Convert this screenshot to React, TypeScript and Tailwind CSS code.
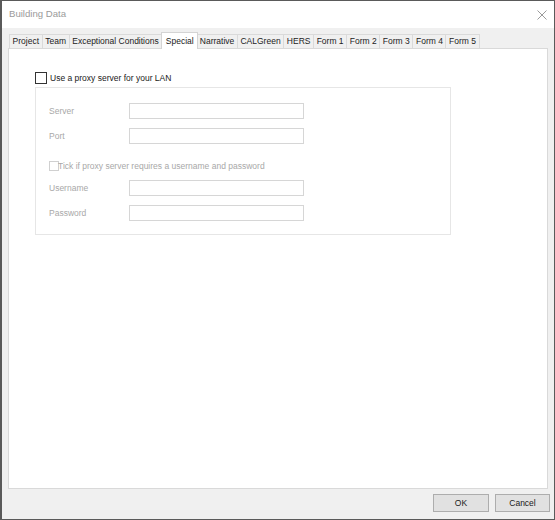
import React from 'react';

const tabs = ['Project', 'Team', 'Exceptional Conditions', 'Special', 'Narrative', 'CALGreen', 'HERS', 'Form 1', 'Form 2', 'Form 3', 'Form 4', 'Form 5'];

function Field({ label }: { label: string }) {
  return (
    <div className="flex items-center h-[16px]">
      <span className="w-[93px] pl-[13px] text-[#a8a8a8]">{label}</span>
      <div className="w-[175px] h-[16px] border border-[#d6d6d6] bg-white" />
    </div>
  );
}

export default function App() {
  return (
    <div
      className="w-[555px] h-[520px] flex flex-col bg-[#f0f0f0] border border-[#5a5a5a] border-l-2 text-[8.5px] text-[#1a1a1a] overflow-hidden"
      style={{ fontFamily: '"Liberation Sans", Arial, sans-serif' }}
    >
      {/* Title bar */}
      <div className="h-[27px] shrink-0 bg-white flex items-center justify-between pl-[7px] pr-[7px]">
        <span className="text-[9.6px] text-[#9a9a9a]">Building Data</span>
        <svg width="10" height="10" viewBox="0 0 10 10">
          <path d="M0.5 0.5 L9.5 9.5 M9.5 0.5 L0.5 9.5" stroke="#9a9a9a" strokeWidth="1" fill="none" />
        </svg>
      </div>

      {/* Tabs */}
      <div className="flex items-end h-[20px] pl-[7px] shrink-0">
        {tabs.map((t) =>
          t === 'Special' ? (
            <div
              key={t}
              className="relative z-10 -mx-[1px] -mb-[1px] h-[17px] px-[3.5px] flex items-center bg-white border border-b-0 border-[#d4d4d4]"
            >
              {t}
            </div>
          ) : (
            <div
              key={t}
              className="h-[14px] px-[2.6px] flex items-center border border-b-0 border-l-0 first:border-l border-[#dadada] text-[#222]"
            >
              {t}
            </div>
          )
        )}
      </div>

      {/* Panel */}
      <div className="mx-[6px] h-[441px] shrink-0 bg-white border border-[#d9d9d9] pl-[26px] pt-[23px]">
        <div className="flex items-center h-[12px] gap-[3px]">
          <div className="w-[12px] h-[12px] border border-[#333]" />
          <span>Use a proxy server for your LAN</span>
        </div>

        <div className="mt-[3px] w-[416px] h-[148px] border border-[#e6e6e6] pt-[15px] flex flex-col">
          <Field label="Server" />
          <div className="mt-[9px]">
            <Field label="Port" />
          </div>
          <div className="mt-[17px] flex items-center h-[10px] pl-[13px]">
            <div className="w-[10px] h-[10px] border border-[#d0d0d0]" />
            <span className="-ml-[1px] text-[#a8a8a8]">Tick if proxy server requires a username and password</span>
          </div>
          <div className="mt-[9px]">
            <Field label="Username" />
          </div>
          <div className="mt-[9px]">
            <Field label="Password" />
          </div>
        </div>
      </div>

      {/* Buttons */}
      <div className="flex-1 flex items-start justify-end gap-[6px] pt-[5px] pr-[4px]">
        <button className="w-[56px] h-[18px] bg-[#e1e1e1] border border-[#adadad] text-[8.5px] text-[#1a1a1a]">OK</button>
        <button className="w-[55px] h-[18px] bg-[#e1e1e1] border border-[#adadad] text-[8.5px] text-[#1a1a1a]">Cancel</button>
      </div>
    </div>
  );
}
